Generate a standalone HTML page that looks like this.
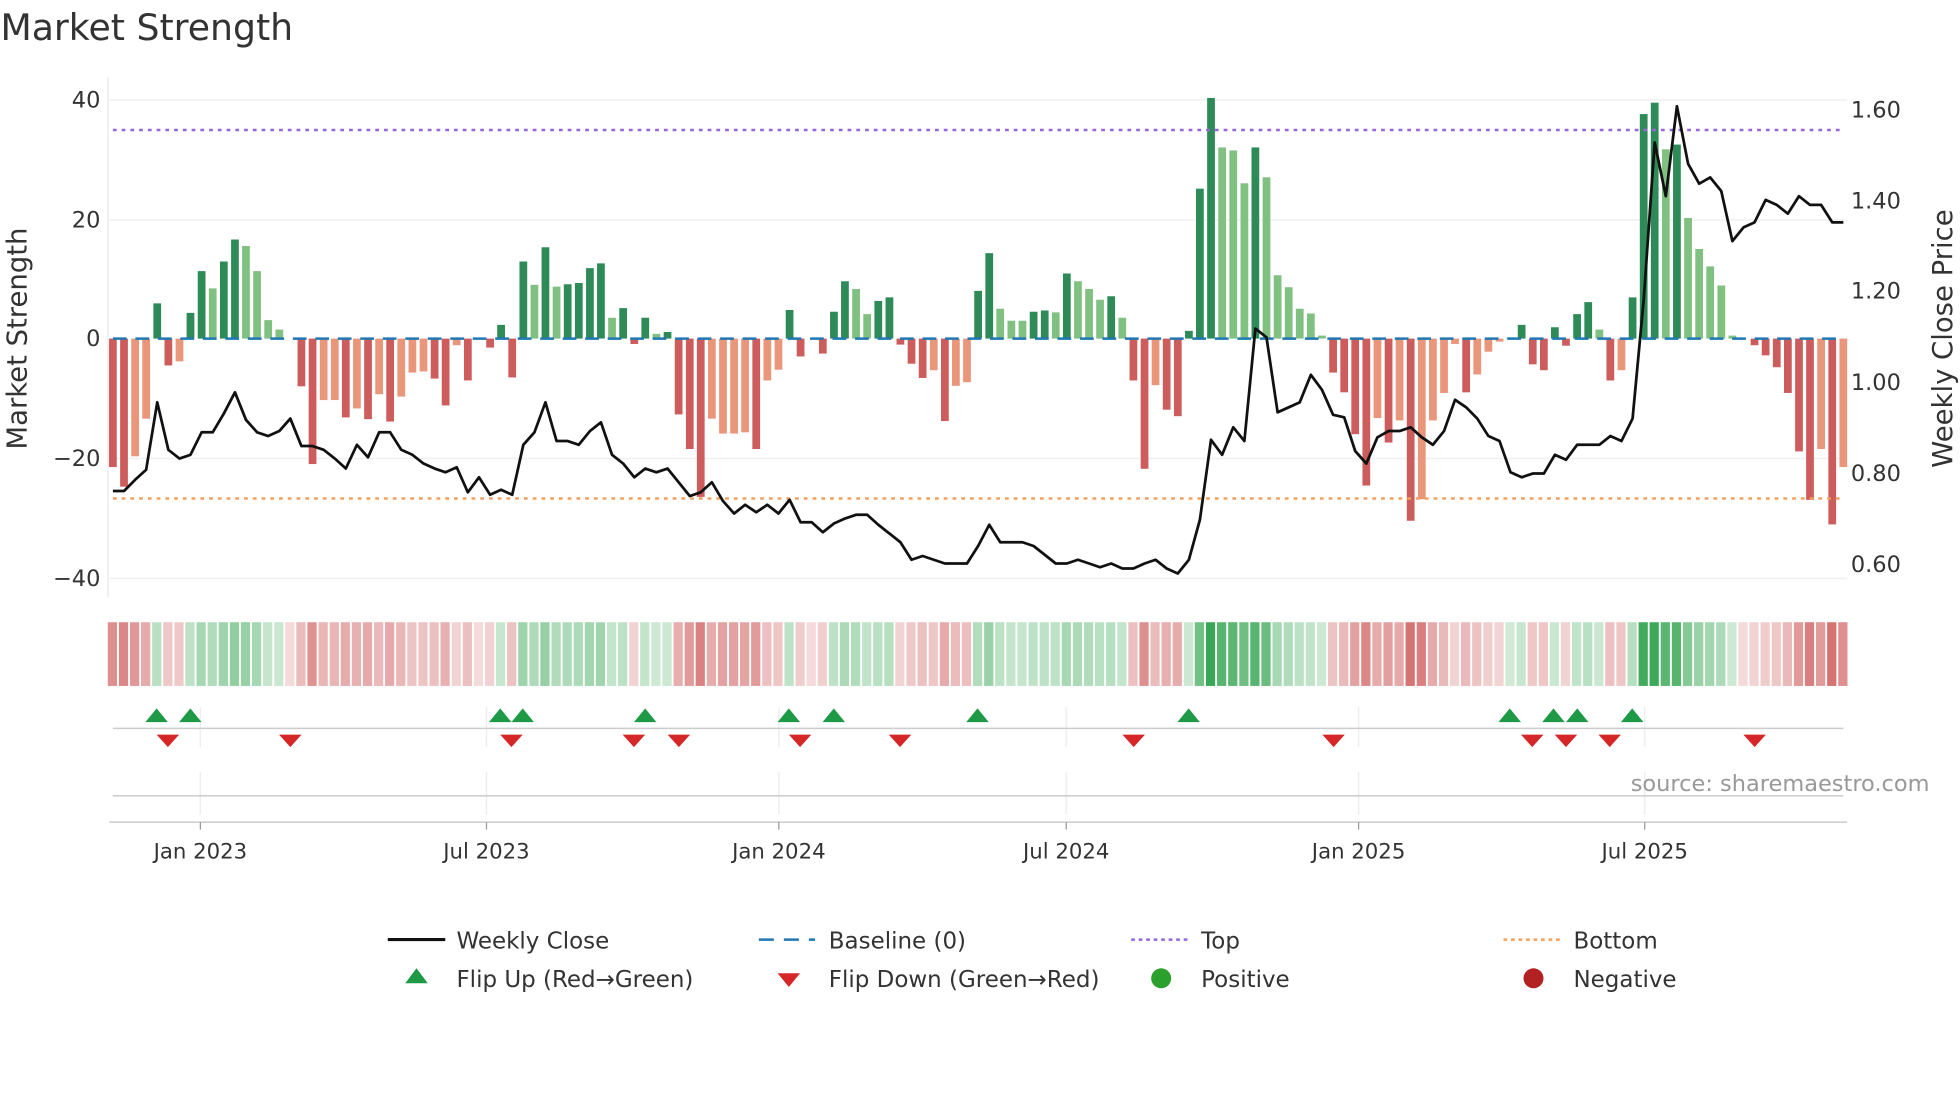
<!DOCTYPE html>
<html><head><meta charset="utf-8"><style>
html,body{margin:0;padding:0;background:#fff;}
svg{display:block;font-family:"DejaVu Sans","Liberation Sans",sans-serif;}
</style></head><body>
<svg id="c" width="1960" height="1102" viewBox="0 0 1568 882" xmlns="http://www.w3.org/2000/svg">
<text x="0" y="32" font-size="29" fill="#333">Market Strength</text>
</svg>
<script>
(function(){
var s=document.getElementById('c'),h='';
var V=[-21.5,-24.8,-19.7,-13.4,5.9,-4.5,-3.8,4.3,11.3,8.4,12.9,16.6,15.5,11.3,3.1,1.5,0,-8,-21,-10.3,-10.3,-13.2,-11.7,-13.5,-9.3,-13.9,-9.7,-5.7,-5.5,-6.7,-11.2,-1.1,-7,0,-1.5,2.3,-6.5,12.9,9,15.3,8.7,9.1,9.3,11.8,12.6,3.5,5.1,-0.9,3.5,0.8,1.1,-12.7,-18.5,-26.5,-13.4,-15.9,-15.9,-15.7,-18.5,-7,-5.2,4.8,-3,0,-2.5,4.5,9.6,8.3,4.1,6.3,6.9,-1,-4.2,-6.6,-5.3,-13.8,-7.9,-7.3,8,14.3,5,3,3,4.5,4.7,4.4,10.9,9.6,8.3,6.5,7.1,3.5,-7,-21.8,-7.8,-11.9,-13,1.3,25.1,40.3,32,31.5,26,32,27,10.6,8.6,5,4.2,0.5,-5.7,-9,-16,-24.6,-13.3,-17.4,-13.7,-30.5,-26.9,-13.7,-9.1,-0.9,-9,-6,-2.2,-0.5,0.2,2.3,-4.3,-5.3,1.9,-1.2,4.1,6.1,1.5,-7,-5.3,6.9,37.6,39.5,31.7,32.5,20.2,15,12.1,8.9,0.5,0,-1.1,-2.8,-4.8,-9.1,-18.9,-27,-18.5,-31.1,-21.5];
var L=[2,3,6,9,12,13,14,15,19,20,22,24,26,27,28,31,38,40,45,49,54,55,56,57,59,60,67,68,74,76,77,80,81,82,85,87,88,89,91,94,100,101,102,104,105,106,107,108,109,114,116,118,119,120,121,123,124,125,126,134,136,140,142,143,144,145,146,154,156];
var isL={};L.forEach(function(i){isL[i]=1;});
var P=[393,393,384,376,322,360,367,364,346,346,331,314,336,346,349,345,335,357,357,360,367,375,356,366,346,346,360,364,371,375,378,374,394,382,396,392,396,356,346,322,353,353,356,345,338,364,371,382,375,378,375,386,397,394,386,401,411,404,410,404,411,400,418,418,426,419,415,412,412,420,427,434,448,445,448,451,451,451,437,420,434,434,434,437,444,451,451,448,451,454,451,455,455,451,448,455,459,448,416,352,364,342,353,263,270,330,326,322,300,312,332,334,361,371,350,345,345,342,350,356,345,320,326,335,349,353,378,382,379,379,364,368,356,356,356,349,353,335,240,114,157,85,131,147,142,153,193,182,178,160,164,171,157,164,164,178,178];
var x0=90,dx=8.878,z=271,k=4.78,bw=6.2;
function X(i){return x0+dx*i;}
[80,176,367,463].forEach(function(y){h+='<line x1="87" x2="1478" y1="'+y+'" y2="'+y+'" stroke="#eef0f2" stroke-width="1.2"/>';});
h+='<line x1="86" x2="86" y1="62" y2="478" stroke="#e6e8ea" stroke-width="1"/>';
for(var i=0;i<V.length;i++){var v=V[i];if(v===0)continue;var y=v>0?z-v*k:z,hh=Math.abs(v)*k;var c=v>0?(isL[i]?'#80c080':'#2e8b57'):(isL[i]?'#e9967a':'#cd5c5c');
h+='<rect x="'+(X(i)-bw/2).toFixed(1)+'" y="'+y.toFixed(1)+'" width="'+bw+'" height="'+hh.toFixed(1)+'" fill="'+c+'"/>';}
h+='<line x1="90" x2="1475" y1="271" y2="271" stroke="#1f77b4" stroke-width="2" stroke-dasharray="11,7"/>';
h+='<line x1="90" x2="1475" y1="104" y2="104" stroke="#9467dd" stroke-width="2" stroke-dasharray="3,4"/>';
h+='<line x1="90" x2="1475" y1="399" y2="399" stroke="#f5a05a" stroke-width="2" stroke-dasharray="3,4"/>';
var pts=P.map(function(p,i){return X(i).toFixed(1)+','+p;}).join(' ');
h+='<polyline points="'+pts+'" fill="none" stroke="#111" stroke-width="2.2" stroke-linejoin="round"/>';
[[80,'40'],[176,'20'],[271,'0'],[367,'\u221220'],[463,'\u221240']].forEach(function(t){h+='<text x="80" y="'+(t[0]+6)+'" font-size="18" fill="#333" text-anchor="end">'+t[1]+'</text>';});
[[88,'1.60'],[161,'1.40'],[233,'1.20'],[306,'1.00'],[379,'0.80'],[452,'0.60']].forEach(function(t){h+='<text x="1481" y="'+(t[0]+6)+'" font-size="18" fill="#333">'+t[1]+'</text>';});
h+='<text transform="translate(21,271) rotate(-90)" font-size="22" fill="#333" text-anchor="middle">Market Strength</text>';
h+='<text transform="translate(1562,271) rotate(-90)" font-size="22" fill="#333" text-anchor="middle">Weekly Close Price</text>';
for(var i=0;i<V.length;i++){var v=V[i],a=0.22+0.7*Math.min(Math.abs(v),40)/40;var c=v>0?'rgba(40,160,70,'+a.toFixed(2)+')':(v<0?'rgba(200,70,70,'+a.toFixed(2)+')':'rgba(200,70,70,0.2)');
h+='<rect x="'+(X(i)-4.1).toFixed(1)+'" y="498" width="7.4" height="51" fill="'+c+'"/>';}
[160,389,623,853,1087,1316].forEach(function(x){h+='<line x1="'+x+'" x2="'+x+'" y1="566" y2="598" stroke="#eee" stroke-width="1.2"/><line x1="'+x+'" x2="'+x+'" y1="618" y2="652" stroke="#eee" stroke-width="1.2"/>';});
h+='<line x1="90" x2="1475" y1="583" y2="583" stroke="#ccc" stroke-width="1.2"/>';
h+='<line x1="90" x2="1475" y1="637" y2="637" stroke="#ccc" stroke-width="1.2"/>';
[125,152,400,418,516,631,667,782,951,1208,1243,1262,1306].forEach(function(x){h+='<polygon points="'+(x-9)+',578 '+(x+9)+',578 '+x+',567" fill="#1e9a46"/>';});
[134,232,409,507,543,640,720,907,1067,1226,1253,1288,1404].forEach(function(x){h+='<polygon points="'+(x-9)+',588 '+(x+9)+',588 '+x+',598" fill="#d62728"/>';});
h+='<text x="1544" y="633" font-size="18" fill="#999" text-anchor="end">source: sharemaestro.com</text>';
h+='<line x1="87" x2="1478" y1="658" y2="658" stroke="#ccc" stroke-width="1.2"/>';
[[160,'Jan 2023'],[389,'Jul 2023'],[623,'Jan 2024'],[853,'Jul 2024'],[1087,'Jan 2025'],[1316,'Jul 2025']].forEach(function(t){h+='<line x1="'+t[0]+'" x2="'+t[0]+'" y1="658" y2="664" stroke="#999"/><text x="'+t[0]+'" y="687" font-size="17" fill="#333" text-anchor="middle">'+t[1]+'</text>';});
var F='font-size="18.4" fill="#333"';
h+='<line x1="310" x2="356" y1="752" y2="752" stroke="#111" stroke-width="2.5"/><text x="365" y="759" '+F+'>Weekly Close</text>';
h+='<line x1="607" x2="652" y1="752" y2="752" stroke="#1f77b4" stroke-width="2" stroke-dasharray="12,8"/><text x="663" y="759" '+F+'>Baseline (0)</text>';
h+='<line x1="905" x2="950" y1="752" y2="752" stroke="#9467dd" stroke-width="2" stroke-dasharray="3,3"/><text x="961" y="759" '+F+'>Top</text>';
h+='<line x1="1203" x2="1248" y1="752" y2="752" stroke="#f5a05a" stroke-width="2" stroke-dasharray="3,3"/><text x="1259" y="759" '+F+'>Bottom</text>';
h+='<polygon points="324,787 342,787 333,775" fill="#1e9a46"/><text x="365" y="790" '+F+'>Flip Up (Red\u2192Green)</text>';
h+='<polygon points="622,779 640,779 631,790" fill="#d62728"/><text x="663" y="790" '+F+'>Flip Down (Green\u2192Red)</text>';
h+='<circle cx="929" cy="783" r="8" fill="#2ca02c"/><text x="961" y="790" '+F+'>Positive</text>';
h+='<circle cx="1227" cy="783" r="8" fill="#b22222"/><text x="1259" y="790" '+F+'>Negative</text>';
s.insertAdjacentHTML('beforeend',h);
})();
</script>
</body></html>
